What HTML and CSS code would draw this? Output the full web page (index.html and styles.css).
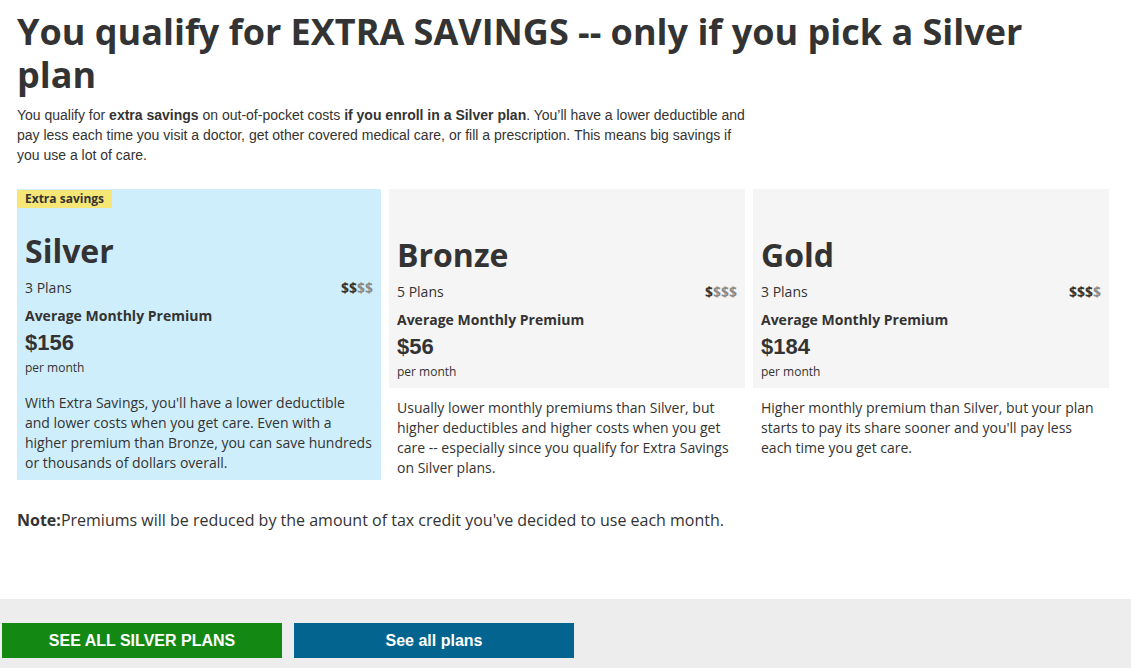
FILE: index.html
```html
<!DOCTYPE html>
<html lang="en">
<head>
<meta charset="utf-8">
<title>Extra savings</title>
<link rel="stylesheet" href="styles.css">
</head>
<body>
<main class="content">
  <h1 class="title">You qualify for EXTRA SAVINGS -- only if you pick a Silver plan</h1>
  <p class="intro">You qualify for <b>extra savings</b> on out-of-pocket costs <b>if you enroll in a Silver plan</b>. You’ll have a lower deductible and pay less each time you visit a doctor, get other covered medical care, or fill a prescription. This means big savings if you use a lot of care.</p>

  <div class="cards">
    <section class="card card-silver">
      <div class="card-top">
        <span class="badge">Extra savings</span>
        <h2 class="card-title">Silver</h2>
        <div class="plans-row"><span>3 Plans</span><span class="cost"><span class="on">$$</span><span class="off">$$</span></span></div>
        <div class="amp">Average Monthly Premium</div>
        <div class="price">$156</div>
        <div class="per">per month</div>
      </div>
      <p class="desc">With Extra Savings, you'll have a lower deductible and lower costs when you get care. Even with a higher premium than Bronze, you can save hundreds or thousands of dollars overall.</p>
    </section>

    <section class="card card-plain">
      <div class="card-top">
        <h2 class="card-title">Bronze</h2>
        <div class="plans-row"><span>5 Plans</span><span class="cost"><span class="on">$</span><span class="off">$$$</span></span></div>
        <div class="amp">Average Monthly Premium</div>
        <div class="price">$56</div>
        <div class="per">per month</div>
      </div>
      <p class="desc">Usually lower monthly premiums than Silver, but higher deductibles and higher costs when you get care -- especially since you qualify for Extra Savings on Silver plans.</p>
    </section>

    <section class="card card-plain">
      <div class="card-top">
        <h2 class="card-title">Gold</h2>
        <div class="plans-row"><span>3 Plans</span><span class="cost"><span class="on">$$$</span><span class="off">$</span></span></div>
        <div class="amp">Average Monthly Premium</div>
        <div class="price">$184</div>
        <div class="per">per month</div>
      </div>
      <p class="desc">Higher monthly premium than Silver, but your plan starts to pay its share sooner and you'll pay less each time you get care.</p>
    </section>
  </div>

  <p class="note"><b>Note:</b>Premiums will be reduced by the amount of tax credit you've decided to use each month.</p>
</main>

<footer class="actions">
  <button class="btn btn-green" type="button">SEE ALL SILVER PLANS</button>
  <button class="btn btn-blue" type="button">See all plans</button>
</footer>
</body>
</html>
```

FILE: styles.css
```css
* { box-sizing: border-box; }

html, body {
  margin: 0;
  padding: 0;
  background: #ffffff;
  color: #333333;
  font-family: "Open Sans", "Liberation Sans", Arial, sans-serif;
}

.content {
  padding: 10px 17px 0 17px;
}

.title {
  margin: 0;
  font-family: "Open Sans", sans-serif;
  font-weight: 700;
  font-size: 36px;
  line-height: 43px;
  color: #333333;
  max-width: 1040px;
}

.intro {
  margin: 9px 0 0 0;
  width: 735px;
  font-family: "Liberation Sans", Arial, sans-serif;
  font-size: 14px;
  line-height: 20px;
  color: #333333;
}

.intro b { font-weight: 700; }

.cards {
  display: grid;
  grid-template-columns: 364px 356px 356px;
  column-gap: 8px;
  align-items: start;
  margin-top: 24px;
}

.card {
  display: flex;
  flex-direction: column;
}

.card-silver {
  background: #cfeefb;
  padding-bottom: 7px;
}

.card-top {
  display: flex;
  flex-direction: column;
  padding: 1px 8px 7px 8px;
}

.card-plain .card-top {
  background: #f5f5f5;
  padding-top: 47px;
}

.badge {
  align-self: flex-start;
  margin-left: -8px;
  background: #f6e675;
  font-size: 12px;
  font-weight: 700;
  line-height: 18px;
  padding: 0 8px;
  color: #333333;
}

.card-title {
  margin: 24px 0 0 0;
  font-size: 32px;
  line-height: 38px;
  font-weight: 700;
  color: #333333;
}

.card-plain .card-title { margin-top: 0; }

.plans-row {
  display: flex;
  justify-content: space-between;
  align-items: center;
  margin-top: 8px;
  font-size: 14px;
  line-height: 20px;
}

.cost {
  font-weight: 700;
  font-size: 14px;
}

.cost .on { color: #333333; }
.cost .off { color: #8a8a8a; }

.amp {
  margin-top: 8px;
  font-size: 14px;
  font-weight: 700;
  line-height: 20px;
}

.price {
  margin-top: 3px;
  font-family: "Liberation Sans", Arial, sans-serif;
  font-size: 22px;
  font-weight: 700;
  line-height: 28px;
}

.per {
  margin-top: 2px;
  font-size: 12px;
  line-height: 18px;
}

.desc {
  margin: 0;
  padding: 9px 8px 0 8px;
  font-size: 14px;
  line-height: 20px;
  color: #333333;
}

.card-plain .desc { padding-top: 10px; }

.note {
  margin: 29px 0 0 0;
  font-size: 16px;
  line-height: 22px;
}

.note b { font-weight: 700; }

.actions {
  margin-top: 68px;
  background: #ededed;
  padding: 24px 2px 20px 2px;
  display: flex;
  gap: 12px;
}

.btn {
  width: 280px;
  height: 35px;
  border: none;
  border-radius: 0;
  color: #ffffff;
  font-family: "Liberation Sans", Arial, sans-serif;
  font-weight: 700;
  font-size: 16px;
  padding: 0;
  cursor: pointer;
}

.btn-green { background: #138913; }
.btn-blue { background: #03658f; }
```
